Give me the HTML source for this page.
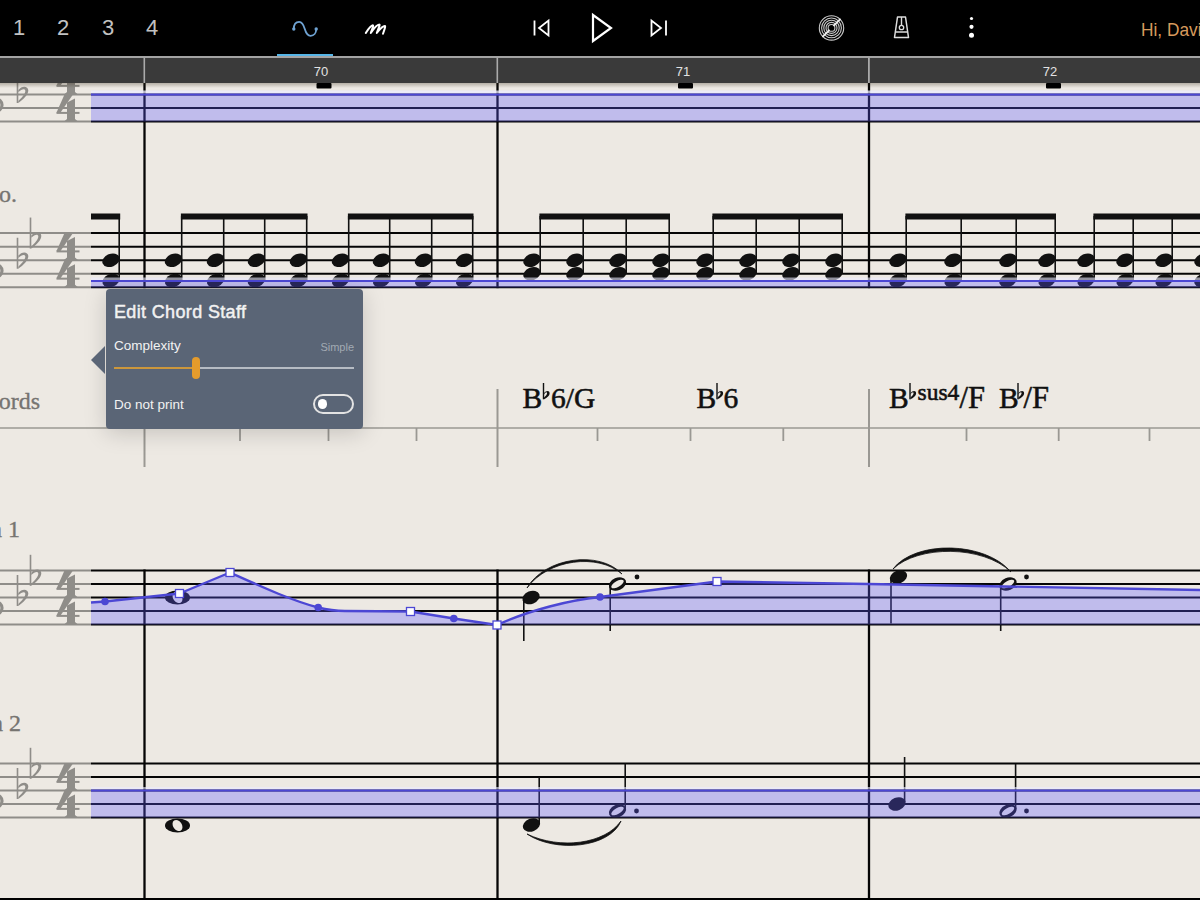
<!DOCTYPE html>
<html><head><meta charset="utf-8"><style>
html,body{margin:0;padding:0;width:1200px;height:900px;overflow:hidden;background:#ede9e3;font-family:"Liberation Sans",sans-serif;}
#hdr{position:absolute;left:0;top:0;width:1200px;height:56px;background:#000;}
.num{position:absolute;top:13px;font-size:22px;color:#c2c2c2;line-height:30px;}
#uline{position:absolute;left:277px;top:54px;width:56px;height:2.5px;background:#55b4e6;}
#hi{position:absolute;left:1140.5px;top:17px;font-size:19px;transform:scaleX(0.91);transform-origin:0 0;color:#d79b5d;line-height:26px;white-space:nowrap;}
#grayline{position:absolute;left:0;top:56px;width:1200px;height:1.5px;background:#a3a3a3;}
#rshadow{position:absolute;left:0;top:83px;width:1200px;height:5px;background:linear-gradient(rgba(50,40,20,0.3),rgba(60,50,30,0));}
#ruler{position:absolute;left:0;top:57.5px;width:1200px;height:25.5px;background:#3a3a3a;}
#pop{position:absolute;left:105.5px;top:288.5px;width:257.5px;height:140px;background:#5a6576;border-radius:4px;box-shadow:0 4px 22px rgba(0,0,0,0.17);color:#f2f2f2;}
#arrow{position:absolute;left:-14.5px;top:57.5px;width:0;height:0;border-top:14px solid transparent;border-bottom:14px solid transparent;border-right:14.5px solid #5a6576;}
#ptitle{position:absolute;left:8.5px;top:12.2px;font-size:18px;letter-spacing:0.35px;-webkit-text-stroke:0.45px #f2f2f2;line-height:22px;}
#pcx{position:absolute;left:8.5px;top:49.5px;font-size:13.5px;line-height:16px;}
#psimple{position:absolute;right:9px;top:51px;font-size:11px;line-height:14px;color:#a2aab3;}
#track{position:absolute;left:8.5px;top:78px;width:240px;height:2px;background:#b6bcc4;}
#trackon{position:absolute;left:8.5px;top:78px;width:82px;height:2px;background:#cc973c;}
#thumb{position:absolute;left:86.5px;top:68px;width:8px;height:22.5px;background:#e49b2c;border-radius:4px;}
#pdnp{position:absolute;left:8.5px;top:108px;font-size:13.5px;line-height:16px;}
#toggle{position:absolute;left:207px;top:105.5px;width:37px;height:15.5px;border:2px solid #e3e3e3;border-radius:10px;}
#knob{position:absolute;left:3px;top:3px;width:9.5px;height:9.5px;border-radius:50%;background:#fff;}
</style></head><body>
<svg width="1200" height="900" style="position:absolute;left:0;top:0"><line x1="0" y1="67.5" x2="91" y2="67.5" stroke="#8f8d89" stroke-width="1.8"/><line x1="91" y1="67.5" x2="1200" y2="67.5" stroke="#050505" stroke-width="1.8"/><line x1="0" y1="81" x2="91" y2="81" stroke="#8f8d89" stroke-width="1.8"/><line x1="91" y1="81" x2="1200" y2="81" stroke="#050505" stroke-width="1.8"/><line x1="0" y1="94.5" x2="91" y2="94.5" stroke="#8f8d89" stroke-width="1.8"/><line x1="91" y1="94.5" x2="1200" y2="94.5" stroke="#050505" stroke-width="1.8"/><line x1="0" y1="108" x2="91" y2="108" stroke="#8f8d89" stroke-width="1.8"/><line x1="91" y1="108" x2="1200" y2="108" stroke="#050505" stroke-width="1.8"/><line x1="0" y1="121.5" x2="91" y2="121.5" stroke="#8f8d89" stroke-width="1.8"/><line x1="91" y1="121.5" x2="1200" y2="121.5" stroke="#050505" stroke-width="1.8"/><line x1="0" y1="233" x2="91" y2="233" stroke="#8f8d89" stroke-width="1.8"/><line x1="91" y1="233" x2="1200" y2="233" stroke="#050505" stroke-width="1.8"/><line x1="0" y1="246.75" x2="91" y2="246.75" stroke="#8f8d89" stroke-width="1.8"/><line x1="91" y1="246.75" x2="1200" y2="246.75" stroke="#050505" stroke-width="1.8"/><line x1="0" y1="260.25" x2="91" y2="260.25" stroke="#8f8d89" stroke-width="1.8"/><line x1="91" y1="260.25" x2="1200" y2="260.25" stroke="#050505" stroke-width="1.8"/><line x1="0" y1="273.75" x2="91" y2="273.75" stroke="#8f8d89" stroke-width="1.8"/><line x1="91" y1="273.75" x2="1200" y2="273.75" stroke="#050505" stroke-width="1.8"/><line x1="0" y1="287.25" x2="91" y2="287.25" stroke="#8f8d89" stroke-width="1.8"/><line x1="91" y1="287.25" x2="1200" y2="287.25" stroke="#050505" stroke-width="1.8"/><line x1="0" y1="570.5" x2="91" y2="570.5" stroke="#8f8d89" stroke-width="1.8"/><line x1="91" y1="570.5" x2="1200" y2="570.5" stroke="#050505" stroke-width="1.8"/><line x1="0" y1="584" x2="91" y2="584" stroke="#8f8d89" stroke-width="1.8"/><line x1="91" y1="584" x2="1200" y2="584" stroke="#050505" stroke-width="1.8"/><line x1="0" y1="597.5" x2="91" y2="597.5" stroke="#8f8d89" stroke-width="1.8"/><line x1="91" y1="597.5" x2="1200" y2="597.5" stroke="#050505" stroke-width="1.8"/><line x1="0" y1="611" x2="91" y2="611" stroke="#8f8d89" stroke-width="1.8"/><line x1="91" y1="611" x2="1200" y2="611" stroke="#050505" stroke-width="1.8"/><line x1="0" y1="624.5" x2="91" y2="624.5" stroke="#8f8d89" stroke-width="1.8"/><line x1="91" y1="624.5" x2="1200" y2="624.5" stroke="#050505" stroke-width="1.8"/><line x1="0" y1="763.5" x2="91" y2="763.5" stroke="#8f8d89" stroke-width="1.8"/><line x1="91" y1="763.5" x2="1200" y2="763.5" stroke="#050505" stroke-width="1.8"/><line x1="0" y1="777" x2="91" y2="777" stroke="#8f8d89" stroke-width="1.8"/><line x1="91" y1="777" x2="1200" y2="777" stroke="#050505" stroke-width="1.8"/><line x1="0" y1="790.5" x2="91" y2="790.5" stroke="#8f8d89" stroke-width="1.8"/><line x1="91" y1="790.5" x2="1200" y2="790.5" stroke="#050505" stroke-width="1.8"/><line x1="0" y1="804" x2="91" y2="804" stroke="#8f8d89" stroke-width="1.8"/><line x1="91" y1="804" x2="1200" y2="804" stroke="#050505" stroke-width="1.8"/><line x1="0" y1="817.5" x2="91" y2="817.5" stroke="#8f8d89" stroke-width="1.8"/><line x1="91" y1="817.5" x2="1200" y2="817.5" stroke="#050505" stroke-width="1.8"/><line x1="144.5" y1="83" x2="144.5" y2="288.15" stroke="#050505" stroke-width="2.3"/><line x1="144.5" y1="569.6" x2="144.5" y2="900" stroke="#050505" stroke-width="2.3"/><line x1="497.5" y1="83" x2="497.5" y2="288.15" stroke="#050505" stroke-width="2.3"/><line x1="497.5" y1="569.6" x2="497.5" y2="900" stroke="#050505" stroke-width="2.3"/><line x1="869" y1="83" x2="869" y2="288.15" stroke="#050505" stroke-width="2.3"/><line x1="869" y1="569.6" x2="869" y2="900" stroke="#050505" stroke-width="2.3"/><ellipse cx="111" cy="260.25" rx="9" ry="6.4" transform="rotate(-22 111 260.25)" fill="#111"/><ellipse cx="111" cy="280.5" rx="9" ry="6.4" transform="rotate(-22 111 280.5)" fill="#111"/><line x1="119.2" y1="216" x2="119.2" y2="280.5" stroke="#111" stroke-width="1.6"/><rect x="91" y="213.5" width="29.2" height="6" fill="#111"/><ellipse cx="173.5" cy="260.25" rx="9" ry="6.4" transform="rotate(-22 173.5 260.25)" fill="#111"/><ellipse cx="173.5" cy="280.5" rx="9" ry="6.4" transform="rotate(-22 173.5 280.5)" fill="#111"/><line x1="181.7" y1="216" x2="181.7" y2="280.5" stroke="#111" stroke-width="1.6"/><ellipse cx="215.5" cy="260.25" rx="9" ry="6.4" transform="rotate(-22 215.5 260.25)" fill="#111"/><ellipse cx="215.5" cy="280.5" rx="9" ry="6.4" transform="rotate(-22 215.5 280.5)" fill="#111"/><line x1="223.7" y1="216" x2="223.7" y2="280.5" stroke="#111" stroke-width="1.6"/><ellipse cx="256.5" cy="260.25" rx="9" ry="6.4" transform="rotate(-22 256.5 260.25)" fill="#111"/><ellipse cx="256.5" cy="280.5" rx="9" ry="6.4" transform="rotate(-22 256.5 280.5)" fill="#111"/><line x1="264.7" y1="216" x2="264.7" y2="280.5" stroke="#111" stroke-width="1.6"/><ellipse cx="298.5" cy="260.25" rx="9" ry="6.4" transform="rotate(-22 298.5 260.25)" fill="#111"/><ellipse cx="298.5" cy="280.5" rx="9" ry="6.4" transform="rotate(-22 298.5 280.5)" fill="#111"/><line x1="306.7" y1="216" x2="306.7" y2="280.5" stroke="#111" stroke-width="1.6"/><rect x="180.9" y="213.5" width="126.6" height="6" fill="#111"/><ellipse cx="340.5" cy="260.25" rx="9" ry="6.4" transform="rotate(-22 340.5 260.25)" fill="#111"/><ellipse cx="340.5" cy="280.5" rx="9" ry="6.4" transform="rotate(-22 340.5 280.5)" fill="#111"/><line x1="348.7" y1="216" x2="348.7" y2="280.5" stroke="#111" stroke-width="1.6"/><ellipse cx="381.5" cy="260.25" rx="9" ry="6.4" transform="rotate(-22 381.5 260.25)" fill="#111"/><ellipse cx="381.5" cy="280.5" rx="9" ry="6.4" transform="rotate(-22 381.5 280.5)" fill="#111"/><line x1="389.7" y1="216" x2="389.7" y2="280.5" stroke="#111" stroke-width="1.6"/><ellipse cx="423.5" cy="260.25" rx="9" ry="6.4" transform="rotate(-22 423.5 260.25)" fill="#111"/><ellipse cx="423.5" cy="280.5" rx="9" ry="6.4" transform="rotate(-22 423.5 280.5)" fill="#111"/><line x1="431.7" y1="216" x2="431.7" y2="280.5" stroke="#111" stroke-width="1.6"/><ellipse cx="464.5" cy="260.25" rx="9" ry="6.4" transform="rotate(-22 464.5 260.25)" fill="#111"/><ellipse cx="464.5" cy="280.5" rx="9" ry="6.4" transform="rotate(-22 464.5 280.5)" fill="#111"/><line x1="472.7" y1="216" x2="472.7" y2="280.5" stroke="#111" stroke-width="1.6"/><rect x="347.9" y="213.5" width="125.6" height="6" fill="#111"/><ellipse cx="532" cy="260.25" rx="9" ry="6.4" transform="rotate(-22 532 260.25)" fill="#111"/><ellipse cx="532" cy="273.75" rx="9" ry="6.4" transform="rotate(-22 532 273.75)" fill="#111"/><line x1="540.2" y1="216" x2="540.2" y2="273.75" stroke="#111" stroke-width="1.6"/><ellipse cx="575" cy="260.25" rx="9" ry="6.4" transform="rotate(-22 575 260.25)" fill="#111"/><ellipse cx="575" cy="273.75" rx="9" ry="6.4" transform="rotate(-22 575 273.75)" fill="#111"/><line x1="583.2" y1="216" x2="583.2" y2="273.75" stroke="#111" stroke-width="1.6"/><ellipse cx="618" cy="260.25" rx="9" ry="6.4" transform="rotate(-22 618 260.25)" fill="#111"/><ellipse cx="618" cy="273.75" rx="9" ry="6.4" transform="rotate(-22 618 273.75)" fill="#111"/><line x1="626.2" y1="216" x2="626.2" y2="273.75" stroke="#111" stroke-width="1.6"/><ellipse cx="661" cy="260.25" rx="9" ry="6.4" transform="rotate(-22 661 260.25)" fill="#111"/><ellipse cx="661" cy="273.75" rx="9" ry="6.4" transform="rotate(-22 661 273.75)" fill="#111"/><line x1="669.2" y1="216" x2="669.2" y2="273.75" stroke="#111" stroke-width="1.6"/><rect x="539.4" y="213.5" width="130.6" height="6" fill="#111"/><ellipse cx="705" cy="260.25" rx="9" ry="6.4" transform="rotate(-22 705 260.25)" fill="#111"/><ellipse cx="705" cy="273.75" rx="9" ry="6.4" transform="rotate(-22 705 273.75)" fill="#111"/><line x1="713.2" y1="216" x2="713.2" y2="273.75" stroke="#111" stroke-width="1.6"/><ellipse cx="748" cy="260.25" rx="9" ry="6.4" transform="rotate(-22 748 260.25)" fill="#111"/><ellipse cx="748" cy="273.75" rx="9" ry="6.4" transform="rotate(-22 748 273.75)" fill="#111"/><line x1="756.2" y1="216" x2="756.2" y2="273.75" stroke="#111" stroke-width="1.6"/><ellipse cx="791" cy="260.25" rx="9" ry="6.4" transform="rotate(-22 791 260.25)" fill="#111"/><ellipse cx="791" cy="273.75" rx="9" ry="6.4" transform="rotate(-22 791 273.75)" fill="#111"/><line x1="799.2" y1="216" x2="799.2" y2="273.75" stroke="#111" stroke-width="1.6"/><ellipse cx="834" cy="260.25" rx="9" ry="6.4" transform="rotate(-22 834 260.25)" fill="#111"/><ellipse cx="834" cy="273.75" rx="9" ry="6.4" transform="rotate(-22 834 273.75)" fill="#111"/><line x1="842.2" y1="216" x2="842.2" y2="273.75" stroke="#111" stroke-width="1.6"/><rect x="712.4" y="213.5" width="130.6" height="6" fill="#111"/><ellipse cx="898" cy="260.25" rx="9" ry="6.4" transform="rotate(-22 898 260.25)" fill="#111"/><ellipse cx="898" cy="280.5" rx="9" ry="6.4" transform="rotate(-22 898 280.5)" fill="#111"/><line x1="906.2" y1="216" x2="906.2" y2="280.5" stroke="#111" stroke-width="1.6"/><ellipse cx="953" cy="260.25" rx="9" ry="6.4" transform="rotate(-22 953 260.25)" fill="#111"/><ellipse cx="953" cy="280.5" rx="9" ry="6.4" transform="rotate(-22 953 280.5)" fill="#111"/><line x1="961.2" y1="216" x2="961.2" y2="280.5" stroke="#111" stroke-width="1.6"/><ellipse cx="1008" cy="260.25" rx="9" ry="6.4" transform="rotate(-22 1008 260.25)" fill="#111"/><ellipse cx="1008" cy="280.5" rx="9" ry="6.4" transform="rotate(-22 1008 280.5)" fill="#111"/><line x1="1016.2" y1="216" x2="1016.2" y2="280.5" stroke="#111" stroke-width="1.6"/><ellipse cx="1047" cy="260.25" rx="9" ry="6.4" transform="rotate(-22 1047 260.25)" fill="#111"/><ellipse cx="1047" cy="280.5" rx="9" ry="6.4" transform="rotate(-22 1047 280.5)" fill="#111"/><line x1="1055.2" y1="216" x2="1055.2" y2="280.5" stroke="#111" stroke-width="1.6"/><rect x="905.4" y="213.5" width="150.6" height="6" fill="#111"/><ellipse cx="1086" cy="260.25" rx="9" ry="6.4" transform="rotate(-22 1086 260.25)" fill="#111"/><ellipse cx="1086" cy="280.5" rx="9" ry="6.4" transform="rotate(-22 1086 280.5)" fill="#111"/><line x1="1094.2" y1="216" x2="1094.2" y2="280.5" stroke="#111" stroke-width="1.6"/><ellipse cx="1125" cy="260.25" rx="9" ry="6.4" transform="rotate(-22 1125 260.25)" fill="#111"/><ellipse cx="1125" cy="280.5" rx="9" ry="6.4" transform="rotate(-22 1125 280.5)" fill="#111"/><line x1="1133.2" y1="216" x2="1133.2" y2="280.5" stroke="#111" stroke-width="1.6"/><ellipse cx="1164" cy="260.25" rx="9" ry="6.4" transform="rotate(-22 1164 260.25)" fill="#111"/><ellipse cx="1164" cy="280.5" rx="9" ry="6.4" transform="rotate(-22 1164 280.5)" fill="#111"/><line x1="1172.2" y1="216" x2="1172.2" y2="280.5" stroke="#111" stroke-width="1.6"/><ellipse cx="1203" cy="260.25" rx="9" ry="6.4" transform="rotate(-22 1203 260.25)" fill="#111"/><ellipse cx="1203" cy="280.5" rx="9" ry="6.4" transform="rotate(-22 1203 280.5)" fill="#111"/><line x1="1211.2" y1="216" x2="1211.2" y2="280.5" stroke="#111" stroke-width="1.6"/><rect x="1093.4" y="213.5" width="115.6" height="6" fill="#111"/><ellipse cx="177.5" cy="597.5" rx="12.5" ry="7" fill="#111"/><ellipse cx="177.5" cy="597.5" rx="4.4" ry="6" transform="rotate(-35 177.5 597.5)" fill="#ede9e3"/><ellipse cx="531" cy="597.5" rx="9" ry="6.4" transform="rotate(-22 531 597.5)" fill="#111"/><line x1="523.8" y1="598" x2="523.8" y2="641" stroke="#111" stroke-width="1.6"/><ellipse cx="617.5" cy="584" rx="9" ry="6.2" transform="rotate(-24 617.5 584)" fill="#111"/><ellipse cx="617.5" cy="584" rx="7" ry="3" transform="rotate(-30 617.5 584)" fill="#ede9e3"/><line x1="610.2" y1="585" x2="610.2" y2="631" stroke="#111" stroke-width="1.6"/><circle cx="637" cy="577" r="2.4" fill="#111"/><path d="M527 588 C545 557 600 550 622 574 C598 553 548 559 527 588Z" stroke="#111" stroke-width="0.8" fill="#111"/><ellipse cx="898.5" cy="577" rx="9" ry="6.4" transform="rotate(-22 898.5 577)" fill="#111"/><line x1="891" y1="578" x2="891" y2="623.5" stroke="#111" stroke-width="1.6"/><ellipse cx="1008" cy="584" rx="9" ry="6.2" transform="rotate(-24 1008 584)" fill="#111"/><ellipse cx="1008" cy="584" rx="7" ry="3" transform="rotate(-30 1008 584)" fill="#ede9e3"/><line x1="1000.7" y1="585" x2="1000.7" y2="631" stroke="#111" stroke-width="1.6"/><circle cx="1026.5" cy="577" r="2.4" fill="#111"/><path d="M893 569 C915 540 985 541 1011 572 C983 545 918 545 893 569Z" stroke="#111" stroke-width="0.8" fill="#111"/><ellipse cx="177.5" cy="825.5" rx="12.5" ry="7" fill="#111"/><ellipse cx="177.5" cy="825.5" rx="4.4" ry="6" transform="rotate(-35 177.5 825.5)" fill="#ede9e3"/><ellipse cx="531.5" cy="825" rx="9" ry="6.4" transform="rotate(-22 531.5 825)" fill="#111"/><line x1="539.2" y1="777" x2="539.2" y2="823" stroke="#111" stroke-width="1.6"/><ellipse cx="617.5" cy="811" rx="9" ry="6.2" transform="rotate(-24 617.5 811)" fill="#111"/><ellipse cx="617.5" cy="811" rx="7" ry="3" transform="rotate(-30 617.5 811)" fill="#ede9e3"/><line x1="625.2" y1="763.5" x2="625.2" y2="809" stroke="#111" stroke-width="1.6"/><circle cx="636.5" cy="811" r="2.4" fill="#111"/><path d="M527 834 C555 853 610 848 621 821 C605 844 560 850 527 834Z" stroke="#111" stroke-width="0.8" fill="#111"/><ellipse cx="897" cy="804" rx="9" ry="6.4" transform="rotate(-22 897 804)" fill="#111"/><line x1="904.6" y1="757" x2="904.6" y2="802" stroke="#111" stroke-width="1.6"/><ellipse cx="1008" cy="811" rx="9" ry="6.2" transform="rotate(-24 1008 811)" fill="#111"/><ellipse cx="1008" cy="811" rx="7" ry="3" transform="rotate(-30 1008 811)" fill="#ede9e3"/><line x1="1015.6" y1="764" x2="1015.6" y2="809" stroke="#111" stroke-width="1.6"/><circle cx="1026.5" cy="811" r="2.4" fill="#111"/><rect x="91" y="94" width="1109" height="27.5" fill="rgba(96,89,255,0.314)"/><rect x="91" y="90.5" width="1109" height="3" fill="rgba(235,235,255,0.75)"/><line x1="91" y1="94.5" x2="1200" y2="94.5" stroke="#4c47d4" stroke-width="2.2"/><rect x="91" y="280.5" width="1109" height="7" fill="rgba(96,89,255,0.314)"/><rect x="91" y="277.5" width="1109" height="2.5" fill="rgba(235,235,255,0.6)"/><line x1="91" y1="281" x2="1200" y2="281" stroke="#4c47d4" stroke-width="2.2"/><rect x="91" y="790" width="1109" height="27.5" fill="rgba(96,89,255,0.314)"/><rect x="91" y="787" width="1109" height="2.5" fill="rgba(235,235,255,0.6)"/><line x1="91" y1="790.5" x2="1200" y2="790.5" stroke="#4c47d4" stroke-width="2.2"/><path d="M91 602.5 L105 601.5 L179.5 593.5 L230 572.5 C260 586 290 600 318 607.5 C328 610 335 611 345 611 L410.5 611.5 L453.8 618.5 L497 625 C530 610 570 600 600 597 L717 581.5 L868 584 L1200 590 L1200 624.5 L91 624.5 Z" fill="rgba(96,89,255,0.314)"/><path d="M91 602.5 L105 601.5 L179.5 593.5 L230 572.5 C260 586 290 600 318 607.5 C328 610 335 611 345 611 L410.5 611.5 L453.8 618.5 L497 625 C530 610 570 600 600 597 L717 581.5 L868 584 L1200 590" fill="none" stroke="#4c47d4" stroke-width="2.4" stroke-linejoin="round"/><circle cx="105" cy="601.5" r="3.8" fill="#4c47d4"/><circle cx="318.2" cy="607.5" r="3.8" fill="#4c47d4"/><circle cx="453.8" cy="618.5" r="3.8" fill="#4c47d4"/><circle cx="600" cy="597" r="3.8" fill="#4c47d4"/><rect x="175.5" y="589.5" width="8" height="8" fill="#fff" stroke="#4c47d4" stroke-width="1.3"/><rect x="226" y="568.5" width="8" height="8" fill="#fff" stroke="#4c47d4" stroke-width="1.3"/><rect x="406.5" y="607.5" width="8" height="8" fill="#fff" stroke="#4c47d4" stroke-width="1.3"/><rect x="493" y="621" width="8" height="8" fill="#fff" stroke="#4c47d4" stroke-width="1.3"/><rect x="713" y="577.5" width="8" height="8" fill="#fff" stroke="#4c47d4" stroke-width="1.3"/><line x1="0" y1="428" x2="1200" y2="428" stroke="#9a9893" stroke-width="1.6"/><line x1="144.5" y1="389" x2="144.5" y2="467" stroke="#9a9893" stroke-width="2"/><line x1="497.5" y1="389" x2="497.5" y2="467" stroke="#9a9893" stroke-width="2"/><line x1="869" y1="389" x2="869" y2="467" stroke="#9a9893" stroke-width="2"/><line x1="240" y1="428" x2="240" y2="441" stroke="#9a9893" stroke-width="1.8"/><line x1="328.5" y1="428" x2="328.5" y2="441" stroke="#9a9893" stroke-width="1.8"/><line x1="416.5" y1="428" x2="416.5" y2="441" stroke="#9a9893" stroke-width="1.8"/><line x1="597.5" y1="428" x2="597.5" y2="441" stroke="#9a9893" stroke-width="1.8"/><line x1="690.5" y1="428" x2="690.5" y2="441" stroke="#9a9893" stroke-width="1.8"/><line x1="783.3" y1="428" x2="783.3" y2="441" stroke="#9a9893" stroke-width="1.8"/><line x1="966.5" y1="428" x2="966.5" y2="441" stroke="#9a9893" stroke-width="1.8"/><line x1="1058.7" y1="428" x2="1058.7" y2="441" stroke="#9a9893" stroke-width="1.8"/><line x1="1149.5" y1="428" x2="1149.5" y2="441" stroke="#9a9893" stroke-width="1.8"/><text x="522.5" y="408" font-family="Liberation Serif" font-size="29.5" fill="#111" stroke="#111" stroke-width="0.55">B</text><rect x="542.8" y="383" width="1.4" height="16.3" fill="#111"/><path d="M544 393 C546 390.5 549.6 390 549.6 393.2 C549.6 396 546.5 397.8 544 399.3 L544 397.4 C545.8 396 547.2 394.5 547.1 393.1 C547 391.6 545.3 392 544 394.4 Z" fill="#111"/><text x="551" y="408" font-family="Liberation Serif" font-size="29.5" fill="#111" stroke="#111" stroke-width="0.55">6/G</text><text x="696.5" y="408" font-family="Liberation Serif" font-size="29.5" fill="#111" stroke="#111" stroke-width="0.55">B</text><rect x="716.3" y="383" width="1.4" height="16.3" fill="#111"/><path d="M717.5 393 C719.5 390.5 723.1 390 723.1 393.2 C723.1 396 720.0 397.8 717.5 399.3 L717.5 397.4 C719.3 396 720.7 394.5 720.6 393.1 C720.5 391.6 718.8 392 717.5 394.4 Z" fill="#111"/><text x="723.5" y="408" font-family="Liberation Serif" font-size="29.5" fill="#111" stroke="#111" stroke-width="0.55">6</text><text x="889" y="408" font-family="Liberation Serif" font-size="29.5" fill="#111" stroke="#111" stroke-width="0.55">B</text><rect x="909.3" y="383" width="1.4" height="16.3" fill="#111"/><path d="M910.5 393 C912.5 390.5 916.1 390 916.1 393.2 C916.1 396 913.0 397.8 910.5 399.3 L910.5 397.4 C912.3 396 913.7 394.5 913.6 393.1 C913.5 391.6 911.8 392 910.5 394.4 Z" fill="#111"/><text x="917.5" y="399.5" font-family="Liberation Serif" font-size="23.5" fill="#111" stroke="#111" stroke-width="0.55">sus4</text><text x="959.5" y="408" font-family="Liberation Serif" font-size="30.5" fill="#111" stroke="#111" stroke-width="0.55">/F</text><text x="999" y="408" font-family="Liberation Serif" font-size="29.5" fill="#111" stroke="#111" stroke-width="0.55">B</text><rect x="1017.3" y="383" width="1.4" height="16.3" fill="#111"/><path d="M1018.5 393 C1020.5 390.5 1024.1 390 1024.1 393.2 C1024.1 396 1021.0 397.8 1018.5 399.3 L1018.5 397.4 C1020.3 396 1021.7 394.5 1021.6 393.1 C1021.5 391.6 1019.8 392 1018.5 394.4 Z" fill="#111"/><text x="1023.5" y="408" font-family="Liberation Serif" font-size="30.5" fill="#111" stroke="#111" stroke-width="0.55">/F</text><rect x="16.7" y="72.0" width="1.6" height="31" fill="#8f8d89"/><path d="M18.3 90.0 C21.5 85.5 28.0 85.5 28.3 90.3 C28.5 94.5 23.5 99.5 18.3 103.0 L18.3 101.0 C21.5 98.0 25.7 93.5 25.3 90.7 C24.9 88.0 21.5 89.0 18.3 92.3 Z" fill="#8f8d89"/><rect x="29.7" y="51.8" width="1.6" height="31" fill="#8f8d89"/><path d="M31.3 69.8 C34.5 65.3 41.0 65.3 41.3 70.1 C41.5 74.3 36.5 79.3 31.3 82.8 L31.3 80.8 C34.5 77.8 38.7 73.3 38.3 70.5 C37.9 67.8 34.5 68.8 31.3 72.1 Z" fill="#8f8d89"/><polygon points="64.5,67.5 73.0,67.5 60.5,85.5 56.5,85.5" fill="#8f8d89"/><polygon points="67.0,75.5 75.0,71.5 75.0,92.0 78.0,94.5 64.0,94.5 67.0,92.0" fill="#8f8d89"/><rect x="56.5" y="84.9" width="23" height="2" fill="#8f8d89"/><polygon points="64.5,94.5 73.0,94.5 60.5,112.5 56.5,112.5" fill="#8f8d89"/><polygon points="67.0,102.5 75.0,98.5 75.0,119.0 78.0,121.5 64.0,121.5 67.0,119.0" fill="#8f8d89"/><rect x="56.5" y="111.9" width="23" height="2" fill="#8f8d89"/><ellipse cx="-5" cy="105.0" rx="7" ry="6.5" fill="none" stroke="#8f8d89" stroke-width="3.2"/><rect x="16.7" y="237.75" width="1.6" height="31" fill="#8f8d89"/><path d="M18.3 255.75 C21.5 251.25 28.0 251.25 28.3 256.05 C28.5 260.25 23.5 265.25 18.3 268.75 L18.3 266.75 C21.5 263.75 25.7 259.25 25.3 256.45 C24.9 253.75 21.5 254.75 18.3 258.05 Z" fill="#8f8d89"/><rect x="29.7" y="217.55" width="1.6" height="31" fill="#8f8d89"/><path d="M31.3 235.55 C34.5 231.05 41.0 231.05 41.3 235.85000000000002 C41.5 240.05 36.5 245.05 31.3 248.55 L31.3 246.55 C34.5 243.55 38.7 239.05 38.3 236.25 C37.9 233.55 34.5 234.55 31.3 237.85000000000002 Z" fill="#8f8d89"/><polygon points="64.5,233 73.0,233 60.5,251 56.5,251" fill="#8f8d89"/><polygon points="67.0,241 75.0,237 75.0,257.5 78.0,260 64.0,260 67.0,257.5" fill="#8f8d89"/><rect x="56.5" y="250.4" width="23" height="2" fill="#8f8d89"/><polygon points="64.5,260.25 73.0,260.25 60.5,278.25 56.5,278.25" fill="#8f8d89"/><polygon points="67.0,268.25 75.0,264.25 75.0,284.75 78.0,287.25 64.0,287.25 67.0,284.75" fill="#8f8d89"/><rect x="56.5" y="277.65" width="23" height="2" fill="#8f8d89"/><ellipse cx="-5" cy="270.75" rx="7" ry="6.5" fill="none" stroke="#8f8d89" stroke-width="3.2"/><rect x="16.7" y="575.0" width="1.6" height="31" fill="#8f8d89"/><path d="M18.3 593.0 C21.5 588.5 28.0 588.5 28.3 593.3 C28.5 597.5 23.5 602.5 18.3 606.0 L18.3 604.0 C21.5 601.0 25.7 596.5 25.3 593.7 C24.9 591.0 21.5 592.0 18.3 595.3 Z" fill="#8f8d89"/><rect x="29.7" y="554.8" width="1.6" height="31" fill="#8f8d89"/><path d="M31.3 572.8 C34.5 568.3 41.0 568.3 41.3 573.0999999999999 C41.5 577.3 36.5 582.3 31.3 585.8 L31.3 583.8 C34.5 580.8 38.7 576.3 38.3 573.5 C37.9 570.8 34.5 571.8 31.3 575.0999999999999 Z" fill="#8f8d89"/><polygon points="64.5,570.5 73.0,570.5 60.5,588.5 56.5,588.5" fill="#8f8d89"/><polygon points="67.0,578.5 75.0,574.5 75.0,595.0 78.0,597.5 64.0,597.5 67.0,595.0" fill="#8f8d89"/><rect x="56.5" y="587.9" width="23" height="2" fill="#8f8d89"/><polygon points="64.5,597.5 73.0,597.5 60.5,615.5 56.5,615.5" fill="#8f8d89"/><polygon points="67.0,605.5 75.0,601.5 75.0,622.0 78.0,624.5 64.0,624.5 67.0,622.0" fill="#8f8d89"/><rect x="56.5" y="614.9" width="23" height="2" fill="#8f8d89"/><ellipse cx="-5" cy="608.0" rx="7" ry="6.5" fill="none" stroke="#8f8d89" stroke-width="3.2"/><rect x="16.7" y="768.0" width="1.6" height="31" fill="#8f8d89"/><path d="M18.3 786.0 C21.5 781.5 28.0 781.5 28.3 786.3 C28.5 790.5 23.5 795.5 18.3 799.0 L18.3 797.0 C21.5 794.0 25.7 789.5 25.3 786.7 C24.9 784.0 21.5 785.0 18.3 788.3 Z" fill="#8f8d89"/><rect x="29.7" y="747.8" width="1.6" height="31" fill="#8f8d89"/><path d="M31.3 765.8 C34.5 761.3 41.0 761.3 41.3 766.0999999999999 C41.5 770.3 36.5 775.3 31.3 778.8 L31.3 776.8 C34.5 773.8 38.7 769.3 38.3 766.5 C37.9 763.8 34.5 764.8 31.3 768.0999999999999 Z" fill="#8f8d89"/><polygon points="64.5,763.5 73.0,763.5 60.5,781.5 56.5,781.5" fill="#8f8d89"/><polygon points="67.0,771.5 75.0,767.5 75.0,788.0 78.0,790.5 64.0,790.5 67.0,788.0" fill="#8f8d89"/><rect x="56.5" y="780.9" width="23" height="2" fill="#8f8d89"/><polygon points="64.5,790.5 73.0,790.5 60.5,808.5 56.5,808.5" fill="#8f8d89"/><polygon points="67.0,798.5 75.0,794.5 75.0,815.0 78.0,817.5 64.0,817.5 67.0,815.0" fill="#8f8d89"/><rect x="56.5" y="807.9" width="23" height="2" fill="#8f8d89"/><ellipse cx="-5" cy="801.0" rx="7" ry="6.5" fill="none" stroke="#8f8d89" stroke-width="3.2"/><text x="17" y="202" font-family="Liberation Serif" font-size="24" fill="#767471" stroke="#767471" stroke-width="0.35" text-anchor="end">Piano.</text><text x="40" y="409" font-family="Liberation Serif" font-size="24" fill="#767471" stroke="#767471" stroke-width="0.35" text-anchor="end">Chords</text><text x="20" y="537" font-family="Liberation Serif" font-size="24" fill="#767471" stroke="#767471" stroke-width="0.35" text-anchor="end">Violin 1</text><text x="21" y="731" font-family="Liberation Serif" font-size="24" fill="#767471" stroke="#767471" stroke-width="0.35" text-anchor="end">Violin 2</text><rect x="0" y="898" width="1200" height="2" fill="#000"/></svg>

<div id="hdr">
  <div class="num" style="left:13px">1</div>
  <div class="num" style="left:57px">2</div>
  <div class="num" style="left:102px">3</div>
  <div class="num" style="left:146px">4</div>
  <div id="uline"></div>
  <div id="hi">Hi, David</div>
</div>
<div id="grayline"></div>
<div id="ruler"></div><div id="rshadow"></div>

<svg width="1200" height="90" style="position:absolute;left:0;top:0">
 <path d="M293.8 29 C293.8 24.5 296 21.8 299.2 21.8 C302.3 21.8 303.6 24.8 304.8 29 C306 33.2 307.4 35.8 310.6 35.8 C313.8 35.8 316.2 33.3 316.2 29" fill="none" stroke="#6fa3d3" stroke-width="1.8" stroke-linecap="round"/>
 <circle cx="293.8" cy="29" r="1.7" fill="#6fa3d3"/><circle cx="316.2" cy="29" r="1.7" fill="#6fa3d3"/>
 <path d="M365.8 33 C368 29.5 371 25.5 372.8 25.3 C374 25.2 371.5 30.5 370.8 33 C373.5 29 377.5 24.6 379.3 24.5 C380.5 24.4 377.5 30.5 376.8 33 C379.5 29.5 383 26 384.8 26 C386 26 383.8 31 383 33.8" fill="none" stroke="#fff" stroke-width="2" stroke-linecap="round" stroke-linejoin="round"/>
 <line x1="534.5" y1="20.5" x2="534.5" y2="35.5" stroke="#fff" stroke-width="1.8"/>
 <path d="M548.5 20.5 L548.5 35.5 L539 28 Z" fill="none" stroke="#fff" stroke-width="1.8" stroke-linejoin="miter"/>
 <path d="M593 15 L593 41 L611 28 Z" fill="none" stroke="#fff" stroke-width="2.2" stroke-linejoin="miter"/>
 <path d="M651.5 20.5 L651.5 35.5 L661 28 Z" fill="none" stroke="#fff" stroke-width="1.8"/>
 <line x1="666" y1="20.5" x2="666" y2="35.5" stroke="#fff" stroke-width="1.8"/>
 <g fill="none" stroke="#c9c9c9" stroke-width="1.1">
  <circle cx="831.5" cy="27.9" r="12.2"/><circle cx="831.5" cy="27.9" r="9.9"/><circle cx="831.5" cy="27.9" r="7.7"/><circle cx="831.5" cy="27.9" r="5.5"/><circle cx="831.5" cy="27.9" r="3.4"/>
 </g>
 <line x1="834" y1="25.4" x2="840" y2="19.4" stroke="#eee" stroke-width="1.9" stroke-linecap="round"/>
 <line x1="829" y1="30.4" x2="823" y2="36.4" stroke="#eee" stroke-width="1.9" stroke-linecap="round"/>
 <path d="M897.5 17 L905.5 17 L908.5 37.5 L894.5 37.5 Z" fill="none" stroke="#ddd" stroke-width="1.5" stroke-linejoin="round"/>
 <line x1="895.5" y1="32" x2="907.5" y2="32" stroke="#ddd" stroke-width="1.5"/>
 <line x1="901.5" y1="17" x2="901.5" y2="25" stroke="#ddd" stroke-width="1.4"/>
 <circle cx="901.5" cy="27.5" r="2.2" fill="none" stroke="#ddd" stroke-width="1.3"/>
 <circle cx="971.5" cy="18.5" r="1.6" fill="#fff"/><circle cx="971.5" cy="26.8" r="2.1" fill="#fff"/><circle cx="971.5" cy="35.3" r="2.5" fill="#fff"/>
 <g fill="#aaa"><rect x="143.5" y="57.5" width="1.6" height="25.5"/><rect x="496.5" y="57.5" width="1.6" height="25.5"/><rect x="868" y="57.5" width="1.8" height="25.5"/></g>
 <g font-family="Liberation Sans" font-size="13" fill="#e2e2e2" text-anchor="middle"><text x="321" y="76">70</text><text x="683" y="76">71</text><text x="1050" y="76">72</text></g>
 <g fill="#000"><rect x="316.5" y="83" width="15" height="5.5" rx="1"/><rect x="678" y="83" width="15" height="5.5" rx="1"/><rect x="1046" y="83" width="15" height="5.5" rx="1"/></g>
</svg>


<div id="pop">
  <div id="arrow"></div>
  <div id="ptitle">Edit Chord Staff</div>
  <div id="pcx">Complexity</div>
  <div id="psimple">Simple</div>
  <div id="track"></div><div id="trackon"></div><div id="thumb"></div>
  <div id="pdnp">Do not print</div>
  <div id="toggle"><div id="knob"></div></div>
</div>

</body></html>
